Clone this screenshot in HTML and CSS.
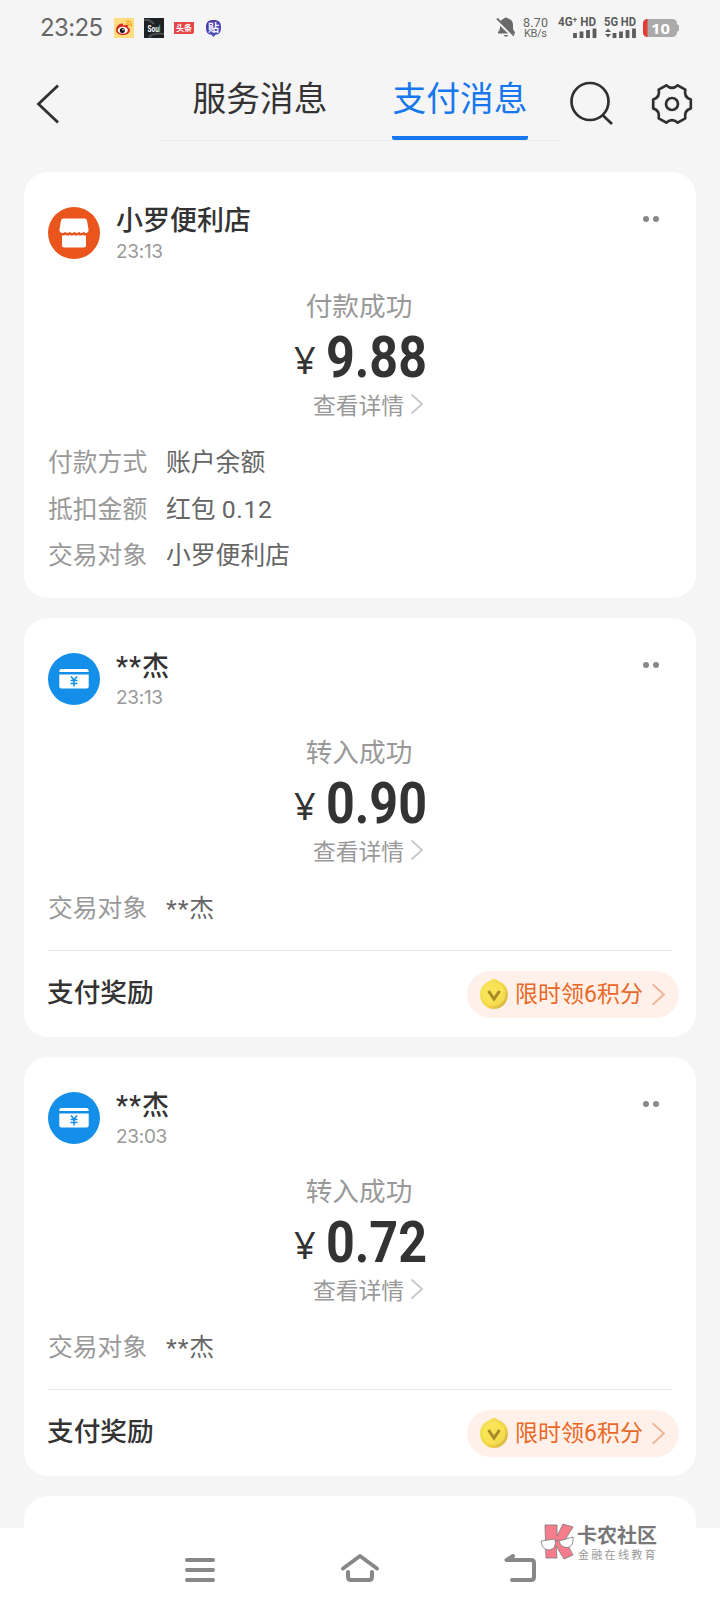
FILE: index.html
```html
<!DOCTYPE html>
<html lang="zh-CN">
<head>
<meta charset="utf-8">
<title>支付消息</title>
<link rel="stylesheet" href="styles.css">
</head>
<body>
<svg class="defs" width="0" height="0" aria-hidden="true">
  <defs>
    <linearGradient id="coin" x1="0" y1="0" x2="1" y2="1"><stop offset="0" stop-color="#f5e660"/><stop offset=".6" stop-color="#f3d548"/><stop offset="1" stop-color="#cfa83e"/></linearGradient>
    <symbol id="i-wallet" viewBox="0 0 52 52">
      <circle cx="26" cy="26" r="26" fill="#148fe9"/>
      <path d="M13.500 16h25a2.200 2.200 0 0 1 2.200 2.200V19H11.300v-.8A2.200 2.200 0 0 1 13.500 16z" fill="#fff"/>
      <path d="M11.300 21.500h29.400v12a2 2 0 0 1-2 2H13.300a2 2 0 0 1-2-2z" fill="#fff"/>
      <path d="M23 23.500l3 3.500 3-3.500M22.500 27.500h7M22.500 30.500h7M26 27v6.500" fill="none" stroke="#148fe9" stroke-width="1.600"/>
    </symbol>
    <symbol id="i-next" viewBox="0 0 14 22"><path d="M1.500 1.500L12 11 1.500 20.500" fill="none" stroke="currentColor" stroke-width="1.900"/></symbol>
    <symbol id="i-coin" viewBox="0 0 30 32">
      <path d="M15 .8c2 0 3 1.500 5 2.500 5 2 9 6.500 9 13C29 25 23 31 15 31S1 25 1 16.300c0-6.500 4-11 9-13C12 2.300 13 .8 15 .8z" fill="url(#coin)"/>
      <circle cx="15" cy="16.500" r="11.300" fill="#fce95a" opacity=".6"/>
      <path d="M9.500 13l5.500 8 5.500-8" fill="none" stroke="#a88a26" stroke-width="3"/>
    </symbol>
  </defs>
</svg>
<div class="screen">
  <div class="status">
    <span class="clock">23:25</span>
    <div class="apps">
      <svg width="20" height="20" viewBox="0 0 20 20"><path fill="#ffdc7d" d="M0 0h20v20H0z"/><path d="M2 12c0-4 4-7 6.500-6.500 1 .3.500 2 .5 2s3-1.500 4.500-.5c1 .8 0 2 0 2s2.500 1 2.500 3.200c0 3-3.500 4.800-7 4.800s-7-1.800-7-5z" fill="#da2c20"/><ellipse cx="8.800" cy="12.200" rx="5" ry="3.500" fill="#fff"/><circle cx="8.300" cy="12.500" r="2.500" fill="#111"/><circle cx="9" cy="11.800" r=".8" fill="#fff"/><path d="M12 3.500c3-1 6 1 5.500 5M12.500 5.800c1.800-.4 3 .8 2.700 2.300" fill="none" stroke="#f0a01e" stroke-width="1.200"/></svg>
      <svg width="20" height="20" viewBox="0 0 20 20"><path fill="#1d2123" d="M0 0h20v20H0z"/><path d="M0 2c5-1 8 2 10 4M5 20c2-4 8-5 15-4" stroke="#4b5052" stroke-width="2" fill="none"/><text class="soul" x="3.500" y="13.500" textLength="13" lengthAdjust="spacingAndGlyphs" fill="#fff">Sou<tspan fill="#3cc8b8">l</tspan></text></svg>
      <svg width="20" height="20" viewBox="0 0 20 20"><path d="M0 4h20v10q0 2-2 2H0z" fill="#e64546"/><text class="mini" x="2" y="13.200" font-size="8" fill="#fff">头条</text></svg>
      <svg class="tie" width="17" height="18" viewBox="0 0 17 18"><defs><linearGradient id="tb" x1="0" x2="1" y2="1"><stop stop-color="#5a2f9c"/><stop offset="1" stop-color="#3958c8"/></linearGradient></defs><path d="M8.500 1C14 1 16 3 16 8.500c0 5-2 7-5.500 7.300L8.500 18l-2-2.200C3 15.500 1 13.500 1 8.500 1 3 3 1 8.500 1z" fill="url(#tb)"/><text class="mini" x="3" y="12.500" font-size="11" fill="#fff">贴</text></svg>
    </div>
    <div class="system">
      <svg width="20" height="22" viewBox="0 0 20 22"><path d="M8 1.500q2-2 4 0c3.500 1 5 3 5 6.500 0 4 0 5 2 7v1.500H2V15c2-2 2-3 2-7 0-3.500 1-5.500 4-6.500zM7.500 18h5q-2.500 3.500-5 0z" fill="#696969"/><path d="M0 3l17.500 16.500" stroke="#f5f5f5" stroke-width="3"/><path d="M1 1.500l17 17" stroke="#696969" stroke-width="1.800"/></svg>
      <svg class="rate" width="28" height="32" viewBox="0 -4 28 32"><text x="0" y="11" font-size="12.500" textLength="25">8.70</text><text x="1" y="21.300" font-size="11" textLength="23">KB/s</text></svg>
      <svg class="signal" width="40" height="32" viewBox="0 -4 40 32"><text x="0" y="10" textLength="38" lengthAdjust="spacingAndGlyphs">4G⁺ HD</text><path d="M17 17v5M23.500 15.500V22M30 14v8M36.500 12.500V22" /></svg>
      <svg class="signal five" width="34" height="32" viewBox="0 -4 34 32"><text x="0" y="10" textLength="32" lengthAdjust="spacingAndGlyphs">5G HD</text><path d="M10.500 17v5M17 15.500V22M23.500 14v8M30 12.500V22"/><path class="arrows" d="M1 16l3-3.500L7 16zM1 18l3 3.500L7 18z"/></svg>
      <svg class="battery" width="36" height="22" viewBox="0 -1 36 22"><rect x="0" y="1" width="34" height="18" rx="4.500" fill="#aaa"/><path d="M4.500 1v18a4.500 4.500 0 0 1-4.500-4.500v-9A4.500 4.500 0 0 1 4.500 1z" fill="#e23c35"/><rect x="33" y="6.500" width="3" height="7" rx="1.500" fill="#aaa"/><text x="8" y="15.700" textLength="19" lengthAdjust="spacingAndGlyphs">10</text></svg>
    </div>
  </div>

  <header class="header">
    <svg class="back" width="24" height="40" viewBox="0 0 24 40"><path d="M22 1.500L2.500 20 22 38.500" fill="none" stroke="#303030" stroke-width="2.800"/></svg>
    <nav class="tabs">
      <span class="tab">服务消息</span>
      <span class="tab active">支付消息</span>
    </nav>
    <svg class="search" width="46" height="46" viewBox="0 0 46 46"><circle cx="21" cy="20.500" r="18.500"/><path d="M33.500 34l9.500 9"/></svg>
    <svg class="gear" width="42" height="42" viewBox="-21 -21 42 42"><path d="M18.800-4.400V4.400Q11.700 6.750 13.300 14.300L5.700 18.700Q0 13.500-5.700 18.700L-13.300 14.300Q-11.700 6.750-18.800 4.400V-4.400Q-11.700-6.750-13.300-14.300L-5.700-18.700Q0-13.500 5.700-18.700L13.300-14.300Q11.700-6.750 18.800-4.400Z"/><circle r="6"/></svg>
  </header>

  <main class="list">
    <article class="card">
      <div class="top">
        <svg class="avatar" viewBox="0 0 52 52"><circle cx="26" cy="26" r="26" fill="#ea551d"/><path d="M15.500 11.500h21q2 0 2.500 2l1.500 9q.4 3-2 3.400-1.700.2-2.700-1.200-2.600 2.600-4.600 0-2.600 2.600-4.700 0-2.600 2.600-4.700 0-2.600 2.600-4.600 0-1.200 1.400-3.200 1.200-2.900-.4-2.500-3.400l1.500-9q.5-2 2.500-2z" fill="#fff"/><path d="M14 28.500q2 .3 3.500-.8 2.300 1.800 4.300 0 2 1.800 4.200 0 2.200 1.800 4.300 0 2 1.800 4.200 0 1.500 1.100 3.500.8v10q0 2-2 2H16q-2 0-2-2z" fill="#fff"/></svg>
        <div class="who"><h2>小罗便利店</h2><time>23:13</time></div>
        <span class="more"><i></i><i></i></span>
      </div>
      <div class="result">
        <p class="state">付款成功</p>
        <svg class="amount" width="140" height="80" viewBox="0 -15 140 80"><text class="yen" x="4" y="42">¥</text><text class="num" x="36" y="45" textLength="101" lengthAdjust="spacingAndGlyphs">9.88</text></svg>
        <p class="detail">查看详情<svg width="14" height="22"><use href="#i-next"/></svg></p>
      </div>
      <dl class="rows">
        <dt>付款方式</dt><dd>账户余额</dd>
        <dt>抵扣金额</dt><dd>红包 <span class="value">0.12</span></dd>
        <dt>交易对象</dt><dd>小罗便利店</dd>
      </dl>
    </article>

    <article class="card">
      <div class="top">
        <svg class="avatar"><use href="#i-wallet"/></svg>
        <div class="who"><h2><span class="mask">**</span>杰</h2><time>23:13</time></div>
        <span class="more"><i></i><i></i></span>
      </div>
      <div class="result">
        <p class="state">转入成功</p>
        <svg class="amount" width="140" height="80" viewBox="0 -15 140 80"><text class="yen" x="4" y="42">¥</text><text class="num" x="36" y="45" textLength="101" lengthAdjust="spacingAndGlyphs">0.90</text></svg>
        <p class="detail">查看详情<svg width="14" height="22"><use href="#i-next"/></svg></p>
      </div>
      <dl class="rows"><dt>交易对象</dt><dd><span class="mask">**</span>杰</dd></dl>
      <div class="reward">
        <h3>支付奖励</h3>
        <span class="pill"><svg width="30" height="32"><use href="#i-coin"/></svg><b>限时领6积分</b><svg class="go" width="15" height="25"><use href="#i-next"/></svg></span>
      </div>
    </article>

    <article class="card">
      <div class="top">
        <svg class="avatar"><use href="#i-wallet"/></svg>
        <div class="who"><h2><span class="mask">**</span>杰</h2><time>23:03</time></div>
        <span class="more"><i></i><i></i></span>
      </div>
      <div class="result">
        <p class="state">转入成功</p>
        <svg class="amount" width="140" height="80" viewBox="0 -15 140 80"><text class="yen" x="4" y="42">¥</text><text class="num" x="36" y="45" textLength="101" lengthAdjust="spacingAndGlyphs">0.72</text></svg>
        <p class="detail">查看详情<svg width="14" height="22"><use href="#i-next"/></svg></p>
      </div>
      <dl class="rows"><dt>交易对象</dt><dd><span class="mask">**</span>杰</dd></dl>
      <div class="reward">
        <h3>支付奖励</h3>
        <span class="pill"><svg width="30" height="32"><use href="#i-coin"/></svg><b>限时领6积分</b><svg class="go" width="15" height="25"><use href="#i-next"/></svg></span>
      </div>
    </article>
    <article class="card"></article>
  </main>

  <footer class="navbar">
    <svg width="36" height="36" viewBox="0 0 36 36"><path d="M5 8h26M5 18h26M5 28h26"/></svg>
    <svg width="40" height="36" viewBox="0 0 40 36"><path d="M3 16.500L20 4l17 12.500M8 20v5q0 3 3 3h18q3 0 3-3v-5"/></svg>
    <svg width="36" height="36" viewBox="0 0 36 36"><path d="M11 4L4.500 8H29q3 0 3 3v14q0 3-3 3H10"/></svg>
  </footer>
  <div class="watermark">
    <svg width="36" height="38" viewBox="0 0 36 38"><g stroke="#777" stroke-width=".8"><path d="M5 2h12v11L23 1l10 3-8 13 8 15-9 4-8-13 1 12H6z" fill="#f77d8c"/><path d="M1 18l14-2q2 10-6 11Q2 27 1 18zM19 18l14-4q1 9-5 10.500Q21 25 19 18zM15 18l4-1" fill="#fff"/></g></svg>
    <div class="mark"><strong>卡农社区</strong><small>金融在线教育</small></div>
  </div>
</div>
</body>
</html>
```
FILE: styles.css
```css
* { box-sizing: border-box; margin: 0; padding: 0; }
body { background: #f5f5f5; font-family: Roboto, "Noto Sans CJK SC", sans-serif; color: #333; }
svg { display: block; flex: none; }
.defs { position: absolute; }
.screen { position: relative; width: 720px; height: 1612px; overflow: hidden; display: flex; flex-direction: column; }

/* system status bar */
.status { height: 56px; padding: 0 41px 0 40px; display: flex; align-items: center; }
.clock { width: 74px; font-family: Inter, sans-serif; font-size: 24px; line-height: 30px; letter-spacing: -.6px; color: #666; }
.apps { display: flex; gap: 10px; align-items: center; }
.tie { margin-left: 1px; }
.soul { font: 700 9px Roboto, sans-serif; }
.mini { font-family: "Noto Sans CJK SC", sans-serif; font-weight: 700; }
.system { margin-left: auto; display: flex; align-items: center; }
.rate { margin-left: 7px; fill: #666; font-family: Roboto, sans-serif; }
.signal { margin-left: 7px; fill: #5c5c5c; font: 700 12.5px Roboto, sans-serif; }
.signal path { stroke: #5c5c5c; stroke-width: 3.800; }
.signal .arrows { stroke: none; }
.signal.five { margin-left: 6px; }
.battery { margin-left: 5px; fill: #fff; font: 700 15px "Open Sans", sans-serif; }

/* title bar */
.header { height: 116px; display: grid; grid-template-columns: 160px 400px 92px 68px; align-items: start; }
.back { margin: 28px 0 0 36px; }
.tabs { height: 85px; border-bottom: 1px solid #ececec; display: flex; justify-content: space-between; padding: 0 32px; }
.tab { width: 136px; height: 84px; text-align: center; font-size: 33.700px; line-height: 87px; white-space: nowrap; }
.tab.active { color: #1677ee; border-bottom: 4px solid #1677ee; border-radius: 2px; }
.search { margin: 25px 0 0 9px; }
.gear { margin: 27px 0 0 -1px; }
.search, .gear { fill: none; stroke: #303030; stroke-width: 2.700; stroke-linejoin: round; }

/* messages */
.list { flex: 1; min-height: 0; overflow: hidden; padding: 0 24px; display: flex; flex-direction: column; gap: 20px; }
.card { background: #fff; border-radius: 24px; flex: none; padding: 0 24px; height: 419px; }
.card:first-child { height: 426px; }
.top { height: 112px; padding-top: 35px; display: flex; align-items: flex-start; }
.avatar { width: 52px; height: 52px; }
.who { margin-left: 16px; flex: 1; }
h2 { font-size: 27px; line-height: 30px; font-weight: 500; margin-top: -1px; }
time { display: block; font-family: Inter, sans-serif; font-size: 19px; line-height: 22px; letter-spacing: -.3px; margin-top: 5px; color: #999; }
.mask { letter-spacing: 1px; }
.more { display: flex; gap: 4px; margin: 9px 13px 0 0; }
.more i { width: 6px; height: 6px; border-radius: 50%; background: #888; }
.result { height: 154px; display: flex; flex-direction: column; align-items: center; }
.state { font-size: 26.700px; line-height: 44px; font-weight: 400; color: #999; margin: 1px 2px 0 0; }
.amount { margin: -12px 0 -13px; fill: #333; }
.yen { font: 400 38px "Noto Sans", sans-serif; }
.num { font: 700 58px Roboto, sans-serif; }
.detail { height: 40px; display: flex; align-items: center; gap: 6px; padding-left: 17px; font-size: 22.800px; font-weight: 400; color: #999; }
.detail svg { color: #c8c8c8; }
.rows { display: grid; grid-template-columns: 118px 1fr; grid-auto-rows: 46.500px; font-size: 24.800px; line-height: 49px; color: #666; }
dt { color: #999; }
.value { letter-spacing: .6px; }
.reward { margin-top: 19px; height: 88px; border-top: 1px solid #e8e8e8; display: flex; align-items: center; justify-content: space-between; }
h3 { font-size: 26.700px; font-weight: 500; line-height: 40px; margin: -2px 0 0 -1px; }
.pill { width: 212px; height: 47px; margin-right: -7px; border-radius: 24px; background: #fff1e9; padding-left: 12px; display: flex; align-items: center; color: #ea6826; }
.pill b { font-weight: 400; font-size: 23px; line-height: 32px; margin: 2px 0 0 6px; width: 136px; white-space: nowrap; }
.go { color: #edb797; }

/* system navigation */
.navbar { height: 84px; flex: none; background: #fff; padding: 24px 182px 0; display: flex; justify-content: space-between; align-items: flex-start; }
.navbar svg { fill: none; stroke: #888; stroke-width: 4; stroke-linecap: round; stroke-linejoin: round; }

/* community stamp over the page */
.watermark { position: absolute; left: 540px; top: 1523px; display: flex; }
.mark { margin-left: 1px; display: flex; flex-direction: column; color: #777; white-space: nowrap; }
.mark strong { font-size: 20px; line-height: 26px; font-weight: 700; }
.mark small { font-size: 11px; line-height: 13px; letter-spacing: 2.300px; color: #999; margin: 0 0 0 1px; }
```
